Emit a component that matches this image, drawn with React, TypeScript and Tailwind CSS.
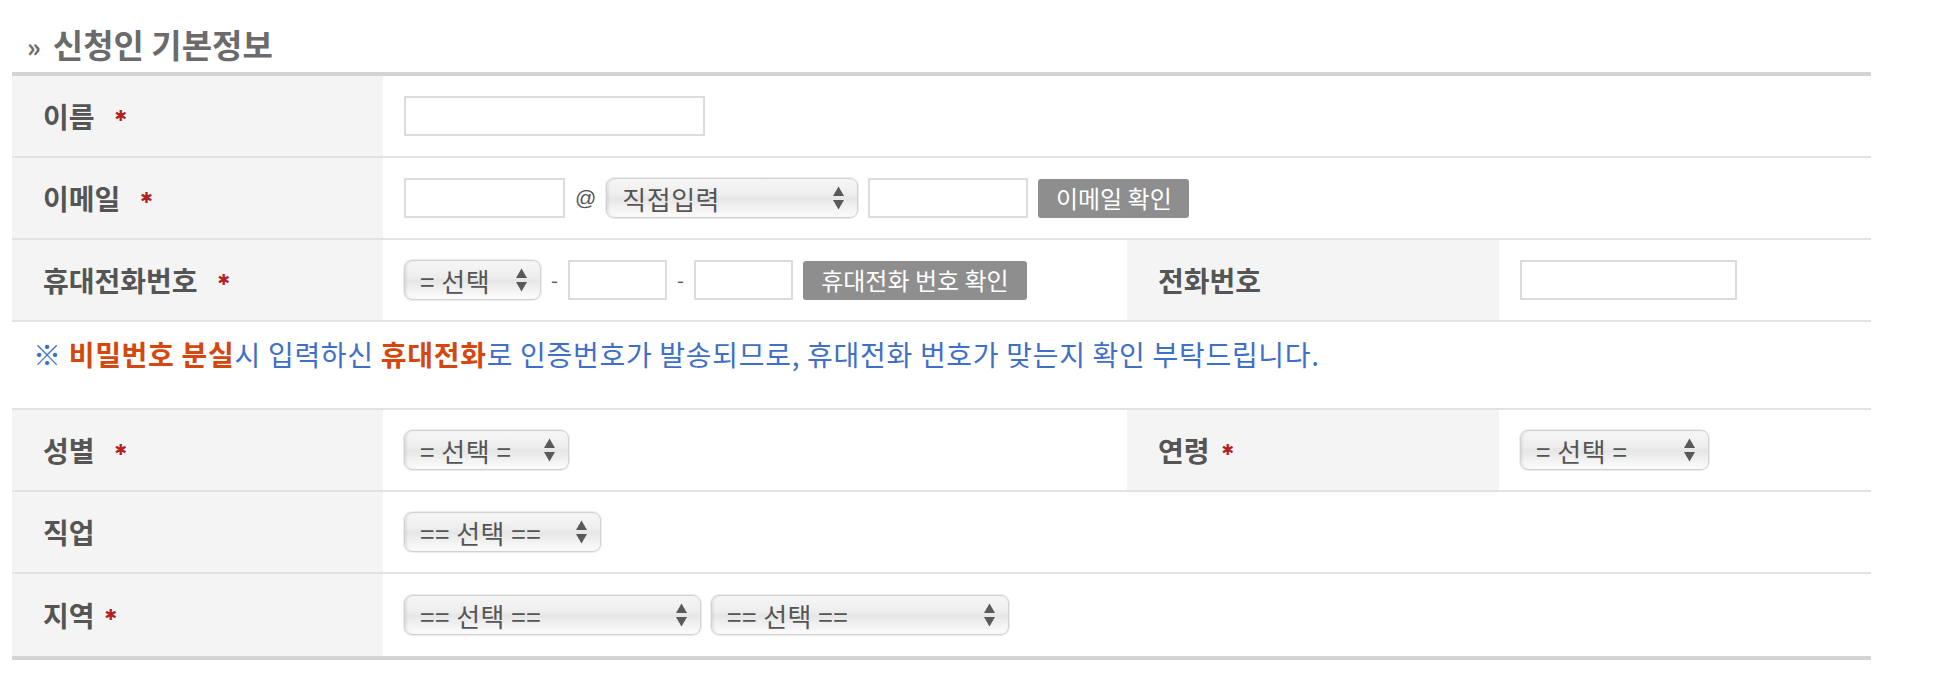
import React from "react";

const labelCell =
  "flex h-full items-center bg-[#f4f4f4] pl-[31px] text-[28px] font-bold text-[#555]";
const valueCell = "flex h-full items-center gap-[10px] pl-[21px]";

function Required({ gap = "ml-[20px]" }: { gap?: string }) {
  return (
    <span
      className={`${gap} font-['DejaVu_Sans',sans-serif] text-[15px] leading-none text-[#b22222]`}
    >
      ✱
    </span>
  );
}

function TextBox({ className }: { className: string }) {
  return (
    <input
      type="text"
      className={`h-[40px] border-2 border-[#dcdcdc] bg-white outline-none ${className}`}
    />
  );
}

function Arrows() {
  return (
    <svg width="13" height="26" viewBox="0 0 13 26" className="shrink-0">
      <path d="M6.5 1.5 L12 11 L1 11 Z" fill="#595959" />
      <path d="M6.5 24.5 L12 15 L1 15 Z" fill="#595959" />
    </svg>
  );
}

function SelectBox({ label, className }: { label: string; className: string }) {
  return (
    <div
      className={`flex h-[40px] items-center justify-between rounded-[8px] border border-[#d2d2d2] bg-[linear-gradient(to_bottom,#f6f6f6_0%,#eeeeee_40%,#e6e6e6_52%,#f4f4f4_80%,#fbfbfb_100%)] pl-[15px] pr-[12px] text-[26px] tracking-[0.5px] text-[#555] shadow-[0_0_0_1px_#ececec,inset_2px_0_2px_rgba(0,0,0,0.06)] ${className}`}
    >
      <span className="whitespace-pre">{label}</span>
      <Arrows />
    </div>
  );
}

function GrayButton({ label, className }: { label: string; className: string }) {
  return (
    <button
      type="button"
      className={`flex h-[39px] items-center justify-center rounded-[3px] bg-[#8e8e8e] text-[24px] text-white ${className}`}
    >
      {label}
    </button>
  );
}

const row = "grid h-[82px] grid-cols-[371px_744px_372px_372px] border-b-2 border-[#e3e3e3]";

export default function App() {
  return (
    <div className="h-[684px] w-[1938px] bg-white font-['Noto_Sans_CJK_KR','Liberation_Sans',sans-serif]">
      <div className="w-[1871px] pl-[12px]">
        <h2 className="flex h-[72px] items-center gap-[12px] pl-[15px] pt-[18px] text-[33px] font-bold text-[#6b6b6b]">
          <span className="text-[26px]">»</span>
          <span>신청인 기본정보</span>
        </h2>

        <div className="border-t-4 border-b-4 border-[#d4d4d4]">
          {/* 이름 */}
          <div className={row}>
            <div className={labelCell}>
              이름
              <Required />
            </div>
            <div className={`${valueCell} col-span-3`}>
              <TextBox className="w-[301px]" />
            </div>
          </div>

          {/* 이메일 */}
          <div className={row}>
            <div className={labelCell}>
              이메일
              <Required />
            </div>
            <div className={`${valueCell} col-span-3`}>
              <TextBox className="w-[161px]" />
              <span className="font-['Liberation_Sans',sans-serif] text-[21px] text-[#555]">@</span>
              <SelectBox label="직접입력" className="w-[252px]" />
              <TextBox className="w-[160px]" />
              <GrayButton label="이메일 확인" className="w-[151px]" />
            </div>
          </div>

          {/* 휴대전화번호 / 전화번호 */}
          <div className={row}>
            <div className={labelCell}>
              휴대전화번호
              <Required />
            </div>
            <div className={valueCell}>
              <SelectBox label="= 선택" className="w-[137px]" />
              <span className="text-[20px] text-[#555]">-</span>
              <TextBox className="w-[99px]" />
              <span className="text-[20px] text-[#555]">-</span>
              <TextBox className="w-[99px]" />
              <GrayButton label="휴대전화 번호 확인" className="w-[224px]" />
            </div>
            <div className={labelCell}>전화번호</div>
            <div className={valueCell}>
              <TextBox className="h-[38px] w-[217px]" />
            </div>
          </div>

          {/* 안내 문구 */}
          <div className="h-[88px] border-b-2 border-[#e3e3e3] pl-[21px] pt-[13px] text-[28px] leading-[38px] tracking-[0.7px] text-[#3f6fc6]">
            ※ <b className="text-[#d4470e]">비밀번호 분실</b>시 입력하신{" "}
            <b className="text-[#d4470e]">휴대전화</b>로 인증번호가 발송되므로, 휴대전화 번호가 맞는지
            확인 부탁드립니다.
          </div>

          {/* 성별 / 연령 */}
          <div className={row}>
            <div className={labelCell}>
              성별
              <Required />
            </div>
            <div className={valueCell}>
              <SelectBox label="= 선택 =" className="w-[165px]" />
            </div>
            <div className={labelCell}>
              연령
              <Required gap="ml-[12px]" />
            </div>
            <div className={valueCell}>
              <SelectBox label="= 선택 =" className="w-[189px]" />
            </div>
          </div>

          {/* 직업 */}
          <div className={row}>
            <div className={labelCell}>직업</div>
            <div className={`${valueCell} col-span-3`}>
              <SelectBox label="== 선택 ==" className="w-[197px]" />
            </div>
          </div>

          {/* 지역 */}
          <div className="grid h-[82px] grid-cols-[371px_1488px]">
            <div className={labelCell}>
              지역
              <Required gap="ml-[10px]" />
            </div>
            <div className={valueCell}>
              <SelectBox label="== 선택 ==" className="w-[297px]" />
              <SelectBox label="== 선택 ==" className="w-[298px]" />
            </div>
          </div>
        </div>
      </div>
    </div>
  );
}
